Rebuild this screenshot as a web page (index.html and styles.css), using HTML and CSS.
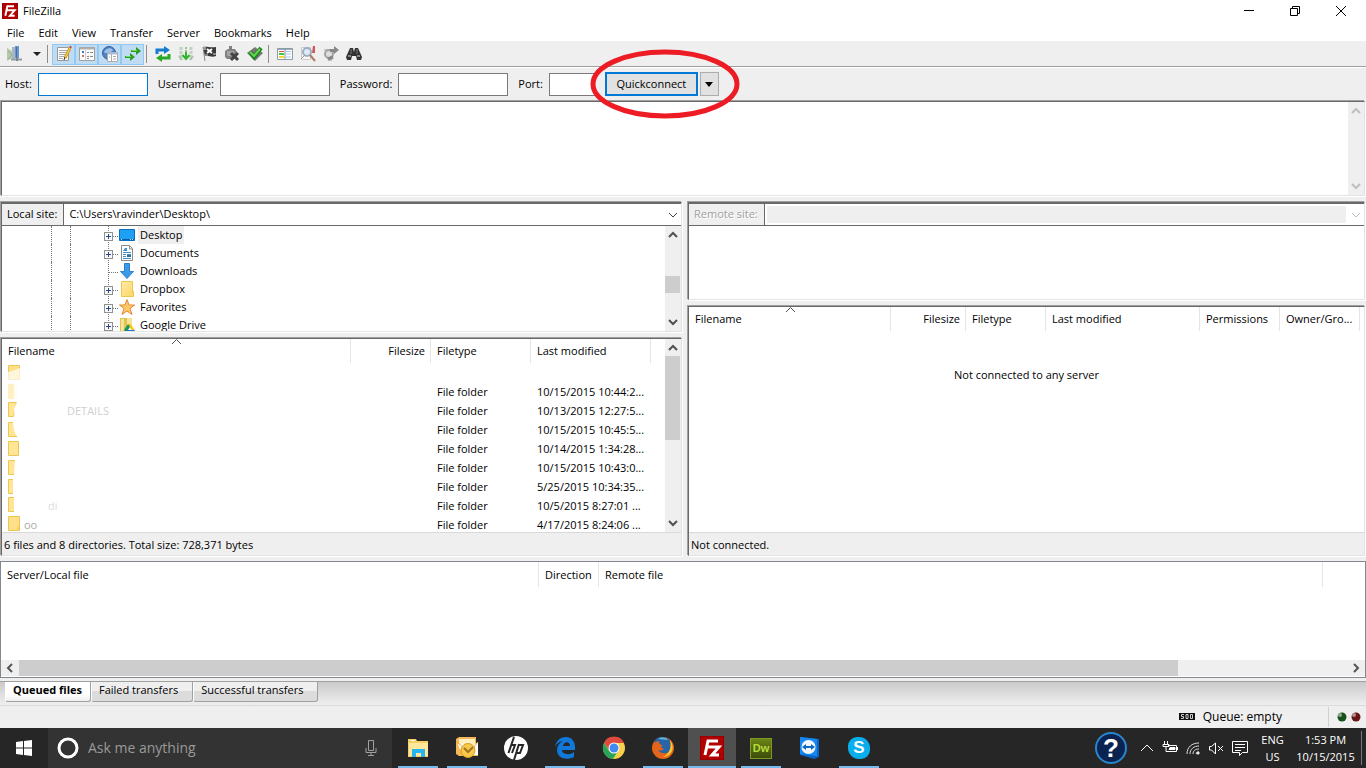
FILE: index.html
```
<!DOCTYPE html>
<html lang="en">
<head>
    <meta charset="utf-8">
    <meta name="viewport" content="width=device-width">
    <title>FileZilla</title>
    <link rel="stylesheet" href="styles.css">
</head>

<body>
    <!-- shared shapes -->
    <svg class="defs" width="0" height="0">
        <defs>
            <linearGradient id="folderFill" x1="0" y1="0" x2="1" y2="1">
                <stop offset="0" stop-color="#ffe9a6"/>
                <stop offset="1" stop-color="#fbd866"/>
            </linearGradient>
            <symbol id="fz" viewBox="0 0 24 24">
                <rect width="24" height="24" fill="#b30000"/>
                <rect x="0.5" y="0.5" width="23" height="23" fill="none" stroke="#7d0000" stroke-dasharray="1 1"/>
                <path d="M5 19L8 5h10M6.500 11h6M12 11h7l-7 8h7" fill="none" stroke="#fff" stroke-width="3"/>
            </symbol>
            <symbol id="up" viewBox="0 0 16 16">
                <path d="M4 10l4-4 4 4" fill="none" stroke="currentColor" stroke-width="2"/>
            </symbol>
            <symbol id="down" viewBox="0 0 16 16">
                <path d="M4 6l4 4 4-4" fill="none" stroke="currentColor" stroke-width="2"/>
            </symbol>
            <symbol id="thin-down" viewBox="0 0 16 16">
                <path d="M4 6l4 4 4-4" fill="none" stroke="currentColor" stroke-width="1"/>
            </symbol>
            <symbol id="expander" viewBox="0 0 15 18">
                <path d="M4.500 0v18" stroke="#777" stroke-dasharray="1 1"/>
                <path d="M9 10.500h6" stroke="#777" stroke-dasharray="1 1"/>
                <rect x="0.500" y="6.500" width="8" height="8" fill="#f8f8f8" stroke="#919191"/>
                <path d="M2 10.500h5M4.500 8v5" stroke="#2a4a9c"/>
            </symbol>
            <symbol id="branch" viewBox="0 0 15 18">
                <path d="M4.500 0v18M5 10.500h10" stroke="#777" stroke-dasharray="1 1"/>
            </symbol>
            <symbol id="folder" viewBox="0 0 16 16">
                <path d="M2.500.500h11v10h1v5h-12z" fill="url(#folderFill)" stroke="#ecc64f"/>
                <path d="M12.500 10.500h2v5" fill="none" stroke="#ecc64f"/>
            </symbol>
        </defs>
    </svg>

    <div class="window">
        <header class="titlebar">
            <svg class="titlebar__logo" width="16" height="16"><use href="#fz"/></svg>
            <span class="titlebar__text">FileZilla</span>
            <button class="titlebar__button" aria-label="Minimize"><svg width="12" height="12"><path d="M1 5.500h10" stroke="#000"/></svg></button>
            <button class="titlebar__button" aria-label="Restore"><svg width="12" height="12" fill="none" stroke="#000"><path d="M1.500 3.500h7v7h-7zM3.500 3V1.500h7v7H9"/></svg></button>
            <button class="titlebar__button" aria-label="Close"><svg width="12" height="12"><path d="M1 1l10 10M11 1L1 11" stroke="#000"/></svg></button>
        </header>

        <nav class="menu">
            <button class="menu__item">File</button>
            <button class="menu__item">Edit</button>
            <button class="menu__item">View</button>
            <button class="menu__item">Transfer</button>
            <button class="menu__item">Server</button>
            <button class="menu__item">Bookmarks</button>
            <button class="menu__item">Help</button>
        </nav>

        <div class="toolbar">
            <button class="tool" aria-label="Site Manager">
                <svg width="16" height="16">
                    <path d="M1 2l5 3v7l-5 3z" fill="#b5c9af"/><path d="M2 5l4 4-4 4" fill="none" stroke="#8eae87"/>
                    <path d="M6 1h3v12H6z" fill="#a9b6c4"/><path d="M9 0h4v12H9z" fill="#6b98cb"/><path d="M10 1h1v10h-1z" fill="#3e6fae"/>
                    <path d="M5 13.500h11" stroke="#969ca3" stroke-width="2"/><path d="M11 11v4" stroke="#7b8490" stroke-width="2"/>
                </svg>
            </button>
            <button class="tool tool--caret" aria-label="Site list"><svg width="8" height="4"><path d="M0 0h8L4 4z" fill="#222"/></svg></button>
            <span class="toolbar__line"></span>
            <button class="tool tool--on" aria-label="Toggle message log">
                <svg width="16" height="16">
                    <path d="M1.500 1.500h11v13h-11z" fill="#fafafa" stroke="#999"/><path d="M3 4.500h8M3 6.500h8M3 8.500h6M3 10.500h5M3 12.500h4" stroke="#aaa"/>
                    <path d="M14 2L9 12" stroke="#d29b1d" stroke-width="3"/><path d="M14 2L9 12" stroke="#ffd95b"/><path d="M14 0l1 2" stroke="#c8463e" stroke-width="2"/><path d="M9 11l-1 3" stroke="#333"/>
                </svg>
            </button>
            <button class="tool tool--on" aria-label="Toggle local tree">
                <svg width="16" height="16">
                    <path d="M.500 1.500h15v13H.500z" fill="#fdfdfd" stroke="#a0a0a0"/><path d="M1 2.500h14" stroke="#b0b0b0" stroke-width="2"/>
                    <path d="M6.500 4v10" stroke="#ccc"/><path d="M3 5h2v2H3z" fill="#3375c7"/><path d="M3 9h2v2H3z" fill="#d36f6f"/>
                    <path d="M8 6.500h2M11 6.500h3M8 10.500h2M11 10.500h3M8 12.500h2" stroke="#888"/>
                </svg>
            </button>
            <button class="tool tool--on" aria-label="Toggle remote tree">
                <svg width="16" height="16">
                    <circle cx="7" cy="7" r="6.500" fill="#4f83c9" stroke="#315f9f"/><path d="M2 6c2-4 7-5 9-2l-3 3H3" fill="#9fc0e7"/>
                    <path d="M5.500 6.500h10v9h-10z" fill="#fff" stroke="#aaa"/><path d="M6 7.500h9" stroke="#aac0dc" stroke-width="2"/><path d="M9.500 8v7M11 10.500h3M11 13h3M7 11h1" stroke="#aaa"/>
                </svg>
            </button>
            <button class="tool tool--on" aria-label="Toggle queue">
                <svg width="16" height="16" fill="#2a9d22">
                    <path d="M6 4h5V1l5 4-5 4V6H6zM0 10h5V7l5 4-5 4v-3H0z"/><path d="M7 4.500h5M1 10.500h5" stroke="#6fdc5f"/>
                </svg>
            </button>
            <span class="toolbar__line"></span>
            <div class="toolbar__group">
                <button class="tool" aria-label="Refresh">
                    <svg width="16" height="16">
                        <path d="M2 8V4h8" fill="none" stroke="#157bd0" stroke-width="3"/><path d="M9 0l6 4-6 4z" fill="#157bd0"/>
                        <path d="M14 8v4H6" fill="none" stroke="#2aa927" stroke-width="3"/><path d="M7 8l-6 4 6 4z" fill="#2aa927"/>
                    </svg>
                </button>
                <button class="tool" aria-label="Process queue">
                    <svg width="16" height="16">
                        <path d="M3 1v13M13 1v13" stroke="#c3d0c1" stroke-width="3" stroke-dasharray="3 1"/>
                        <path d="M8 1v6" stroke="#8fc987" stroke-width="2" stroke-dasharray="2 1"/><path d="M8 6v6M4.500 9L8 13l3.500-4" fill="none" stroke="#33b42c" stroke-width="2"/><path d="M1 10l3 4M15 10l-3 4" stroke="#a3c79e" stroke-width="2"/>
                    </svg>
                </button>
                <button class="tool" aria-label="Cancel">
                    <svg width="16" height="16">
                        <path d="M2 1l2 14" stroke="#888"/><path d="M2 1c4-1 7 1 13 0v9c-5 2-7-1-11 0z" fill="#3a3a3a"/>
                        <path d="M2 1h3v3H2z" fill="#999"/><path d="M6 3l5 4M11 3L6 7" stroke="#fff" stroke-width="2"/><path d="M4 8h3v2H4zM12 7h3v2h-3z" fill="#888"/>
                    </svg>
                </button>
                <button class="tool" aria-label="Disconnect">
                    <svg width="16" height="16">
                        <path d="M5 0h3v4H5zM1 5l3-2h7l2 3v7H3l-2-2z" fill="#818181"/><path d="M3 5h7v5H3z" fill="#a5a5a5"/><path d="M7 7l7 7M14 7l-7 7" stroke="#444" stroke-width="3"/>
                    </svg>
                </button>
                <button class="tool" aria-label="Reconnect">
                    <svg width="16" height="16">
                        <path d="M8 1l8 6-8 8-8-8z" fill="#777"/><path d="M3 6l4 5 7-9" fill="none" stroke="#128715" stroke-width="4"/><path d="M3 6l4 4 6-7" fill="none" stroke="#68d557" stroke-width="2"/>
                    </svg>
                </button>
            </div>
            <span class="toolbar__line"></span>
            <div class="toolbar__group">
                <button class="tool" aria-label="Directory listing filters">
                    <svg width="16" height="16">
                        <path d="M.500 2.500h15v11H.500z" fill="#fff" stroke="#8a9aa8"/><path d="M1 3.500h14" stroke="#9badbd"/>
                        <path d="M2 5.500h5" stroke="#e25555"/><path d="M2 8h5" stroke="#44c638" stroke-width="2"/><path d="M2 11h5" stroke="#f2d438" stroke-width="2"/>
                        <path d="M9 5.500h5M9 8h5M9 11h5" stroke="#a9c3e5"/><path d="M8 3v10" stroke="#7698ae"/>
                    </svg>
                </button>
                <button class="tool" aria-label="Compare directories">
                    <svg width="16" height="16">
                        <path d="M1.500 1.500h9v12h-9z" fill="#f8f8f8" stroke="#ccc"/><path d="M13 0h2v7h-3z" fill="#cf5555"/>
                        <circle cx="7" cy="6" r="4" fill="#dcebfa" stroke="#9fb0c2" stroke-width="2"/><path d="M10 9l5 6" stroke="#b07a66" stroke-width="2"/><path d="M1 13l4-4" stroke="#999"/>
                    </svg>
                </button>
                <button class="tool" aria-label="Synchronized browsing">
                    <svg width="16" height="16">
                        <path d="M1 3h8l2 3-2 9H5z" fill="#c4c4c4"/><circle cx="6" cy="8" r="4" fill="#ddd" stroke="#a2a2a2" stroke-width="2"/>
                        <path d="M7 3h4V0l5 4-5 4V6H7z" fill="#888"/><path d="M5 13l5-2" stroke="#888" stroke-width="3"/>
                    </svg>
                </button>
                <button class="tool" aria-label="Search remote files">
                    <svg width="16" height="16">
                        <path d="M4 2h3l1 4 1-4h3l4 9-1 3h-4l-1-4H6l-1 4H1l-1-3z" fill="#333"/><path d="M2 10h3M11 10h3" stroke="#888" stroke-width="2"/><path d="M5 3v5M11 3v5" stroke="#777"/>
                    </svg>
                </button>
            </div>
        </div>

        <form class="login">
            <label class="login__label" for="host">Host:</label>
            <input class="login__input login__input--focus" id="host" type="text">
            <label class="login__label" for="user">Username:</label>
            <input class="login__input" id="user" type="text">
            <label class="login__label" for="pass">Password:</label>
            <input class="login__input" id="pass" type="password">
            <label class="login__label" for="port">Port:</label>
            <input class="login__input login__input--port" id="port" type="text">
            <div class="login__connect">
                <button class="connect" type="button">Quickconnect</button>
                <button class="connect-menu" type="button" aria-label="Recent servers"><svg width="8" height="5"><path d="M0 0h8L4 5z"/></svg></button>
                <svg class="login__ring" width="152" height="72"><ellipse cx="76" cy="36" rx="72" ry="32" fill="none" stroke="#ed1c24" stroke-width="5"/></svg>
            </div>
        </form>

        <section class="pane log">
            <div class="scroll scroll--off">
                <svg width="16" height="16"><use href="#up"/></svg>
                <svg class="scroll__end" width="16" height="16"><use href="#down"/></svg>
            </div>
        </section>

        <main class="sites">
            <section class="side">
                <div class="pane tree-pane">
                    <div class="path">
                        <label class="path__label" for="local">Local site:</label>
                        <div class="path__box">
                            <select class="path__select" id="local"><option>C:\Users\ravinder\Desktop\</option></select>
                            <svg class="path__arrow" width="16" height="16"><use href="#thin-down"/></svg>
                        </div>
                    </div>
                    <div class="pane__body">
                        <ul class="tree">
                            <li class="tree__row">
                                <span class="tree__guide"></span><span class="tree__guide tree__guide--wide"></span>
                                <svg width="15" height="18"><use href="#expander"/></svg>
                                <svg width="16" height="16"><path d="M.500 2.500h15v11H.500z" fill="#1ea0f5" stroke="#0b6fc0"/><path d="M1 12.500h14" stroke="#0a5da8"/><path d="M2 12.500h1M11 12.500h1M13 12.500h1" stroke="#bfe3ff"/></svg>
                                <span class="tree__name tree__name--current">Desktop</span>
                            </li>
                            <li class="tree__row">
                                <span class="tree__guide"></span><span class="tree__guide tree__guide--wide"></span>
                                <svg width="15" height="18"><use href="#expander"/></svg>
                                <svg width="16" height="16"><path d="M2.500.500h8l3 3v12h-11z" fill="#fff" stroke="#8b8b8b"/><path d="M10.500 1v3h3" fill="none" stroke="#8b8b8b"/><path d="M4 6l2-3h2v3z" fill="#3d95d5"/><path d="M4 7.500h8M4 9.500h3M8 9.500h4M4 11.500h3M4 13.500h8" stroke="#4290c5"/><path d="M8 10h4v2H8z" fill="#2d6f90"/></svg>
                                <span class="tree__name">Documents</span>
                            </li>
                            <li class="tree__row">
                                <span class="tree__guide"></span><span class="tree__guide tree__guide--wide"></span>
                                <svg width="15" height="18"><use href="#branch"/></svg>
                                <svg width="16" height="16"><path d="M5.500.500h5v8h4l-6.500 7-6.500-7h4z" fill="#3b9be9" stroke="#2c80ca"/></svg>
                                <span class="tree__name">Downloads</span>
                            </li>
                            <li class="tree__row">
                                <span class="tree__guide"></span><span class="tree__guide tree__guide--wide"></span>
                                <svg width="15" height="18"><use href="#expander"/></svg>
                                <svg width="16" height="16"><use href="#folder"/></svg>
                                <span class="tree__name">Dropbox</span>
                            </li>
                            <li class="tree__row">
                                <span class="tree__guide"></span><span class="tree__guide tree__guide--wide"></span>
                                <svg width="15" height="18"><use href="#expander"/></svg>
                                <svg width="16" height="16"><path d="M8 .500l2 5.500h5.500L11 9.500l2 6L8 12l-5 3.500 2-6L.500 6H6z" fill="#ffc864" stroke="#e08a35"/></svg>
                                <span class="tree__name">Favorites</span>
                            </li>
                            <li class="tree__row">
                                <span class="tree__guide"></span><span class="tree__guide tree__guide--wide"></span>
                                <svg width="15" height="18"><use href="#expander"/></svg>
                                <svg width="16" height="16"><path d="M1 1h7v14H1z" fill="#e3c34f"/><path d="M2 2h3v12H2zM8 1h5v9H8z" fill="#f7e397"/><path d="M9 7h3l4 7h-3z" fill="#f8c51c"/><path d="M9 7l2 3-4 6-2-3z" fill="#159957"/><path d="M8 13h8l-2 3H6z" fill="#2f6fdb"/></svg>
                                <span class="tree__name">Google Drive</span>
                            </li>
                        </ul>
                        <div class="scroll">
                            <svg width="16" height="16"><use href="#up"/></svg>
                            <span class="scroll__thumb scroll__thumb--tree"></span>
                            <svg class="scroll__end" width="16" height="16"><use href="#down"/></svg>
                        </div>
                    </div>
                </div>

                <div class="pane list-pane">
                    <div class="pane__body">
                        <div class="list">
                            <table class="files">
                                <colgroup><col><col class="w80"><col class="w100"><col class="w120"><col class="w14"></colgroup>
                                <thead>
                                    <tr>
                                        <th class="sorted">Filename<svg class="sort" width="9" height="5"><path d="M0 5l4.500-4.500L9 5" fill="none" stroke="#555"/></svg></th>
                                        <th class="num">Filesize</th><th>Filetype</th><th>Last modified</th><th class="rest"></th>
                                    </tr>
                                </thead>
                                <tbody>
                                    <tr><td><svg class="smudge" width="14" height="16"><path d="M.500.500h11v14H.500z" fill="#ffe08a" stroke="#ecc64f"/><path d="M0 7q6-1 14-5v14H0z" fill="#fff" opacity=".7"/></svg></td><td></td><td></td><td></td><td></td></tr>
                                    <tr><td><svg class="smudge" width="14" height="16"><path d="M.500.500h8v14h-8z" fill="#fff0c4" stroke="#fff0c4"/><path d="M6 0h8v16H6z" fill="#fff" opacity=".8"/></svg></td><td></td><td>File folder</td><td>10/15/2015 10:44:2...</td><td></td></tr>
                                    <tr><td><svg class="smudge" width="14" height="16"><path d="M.500.500h8l-3 14h-5z" fill="#ffe596" stroke="#ecc64f"/><path d="M9 0L6 7l1 9h7V0z" fill="#fff"/></svg><span class="ghost ghost--far">DETAILS</span></td><td></td><td>File folder</td><td>10/13/2015 12:27:5...</td><td></td></tr>
                                    <tr><td><svg class="smudge" width="14" height="16"><path d="M.500.500h10v14H.500z" fill="#ffe596" stroke="#ecc64f"/><path d="M5 0q0 9 5 16h4V0z" fill="#fff"/></svg></td><td></td><td>File folder</td><td>10/15/2015 10:45:5...</td><td></td></tr>
                                    <tr><td><svg class="smudge" width="14" height="16"><path d="M.500.500h10v14H.500z" fill="#ffe596" stroke="#ecc64f"/></svg></td><td></td><td>File folder</td><td>10/14/2015 1:34:28...</td><td></td></tr>
                                    <tr><td><svg class="smudge" width="14" height="16"><path d="M.500.500h8v14h-8z" fill="#ffe596" stroke="#ecc64f"/><path d="M7 0h7v16H6z" fill="#fff"/></svg></td><td></td><td>File folder</td><td>10/15/2015 10:43:0...</td><td></td></tr>
                                    <tr><td><svg class="smudge" width="14" height="16"><path d="M.500.500h6v14h-6z" fill="#ffe596" stroke="#ecc64f"/><path d="M5 0h9v16H5z" fill="#fff"/></svg></td><td></td><td>File folder</td><td>5/25/2015 10:34:35...</td><td></td></tr>
                                    <tr><td><svg class="smudge" width="14" height="16"><path d="M.500.500h6v14h-6z" fill="#ffe596" stroke="#ecc64f"/><path d="M6 0h8v16H6z" fill="#fff"/></svg><span class="ghost ghost--mid">di</span></td><td></td><td>File folder</td><td>10/5/2015 8:27:01 ...</td><td></td></tr>
                                    <tr><td><svg class="smudge" width="14" height="16"><path d="M.500.500h11v14H.500z" fill="#ffe08a" stroke="#ecc64f"/><path d="M10 10v5" stroke="#ecc64f"/></svg><span class="ghost">oo</span></td><td></td><td>File folder</td><td>4/17/2015 8:24:06 ...</td><td></td></tr>
                                </tbody>
                            </table>
                        </div>
                        <div class="scroll">
                            <svg width="16" height="16"><use href="#up"/></svg>
                            <span class="scroll__thumb scroll__thumb--list"></span>
                            <svg class="scroll__end" width="16" height="16"><use href="#down"/></svg>
                        </div>
                    </div>
                    <div class="pane__status">6 files and 8 directories. Total size: 728,371 bytes</div>
                </div>
            </section>

            <section class="side">
                <div class="pane remote-tree">
                    <div class="path">
                        <label class="path__label path__label--off" for="remote">Remote site:</label>
                        <div class="path__box">
                            <select class="path__select path__select--off" id="remote" disabled><option></option></select>
                            <svg class="path__arrow path__arrow--off" width="16" height="16"><use href="#thin-down"/></svg>
                        </div>
                    </div>
                </div>
                <div class="pane list-pane">
                    <div class="pane__body">
                        <div class="list">
                            <table class="files">
                                <colgroup><col><col class="w75"><col class="w80"><col class="w154"><col class="w80"><col class="w80"><col class="w4"></colgroup>
                                <thead>
                                    <tr>
                                        <th class="sorted">Filename<svg class="sort" width="9" height="5"><path d="M0 5l4.500-4.500L9 5" fill="none" stroke="#555"/></svg></th>
                                        <th class="num">Filesize</th><th>Filetype</th><th>Last modified</th><th>Permissions</th><th>Owner/Gro...</th><th class="rest"></th>
                                    </tr>
                                </thead>
                            </table>
                            <p class="list__empty">Not connected to any server</p>
                        </div>
                    </div>
                    <div class="pane__status">Not connected.</div>
                </div>
            </section>
        </main>

        <section class="queue">
            <table class="files files--queue">
                <colgroup><col class="w538"><col class="w60"><col><col class="w42"></colgroup>
                <thead>
                    <tr><th>Server/Local file</th><th>Direction</th><th>Remote file</th><th class="rest"></th></tr>
                </thead>
            </table>
            <div class="hscroll">
                <svg width="18" height="16"><path d="M11 4L7 8l4 4" fill="none" stroke="#555" stroke-width="2"/></svg>
                <span class="hscroll__track"><span class="hscroll__thumb"></span></span>
                <svg width="18" height="16"><path d="M7 4l4 4-4 4" fill="none" stroke="#555" stroke-width="2"/></svg>
            </div>
        </section>

        <div class="tabs">
            <button class="tab tab--active">Queued files</button>
            <button class="tab">Failed transfers</button>
            <button class="tab">Successful transfers</button>
        </div>

        <footer class="statusbar">
            <svg width="16" height="8"><path d="M0 0h16v7H0z" fill="#111"/><path d="M5 1.500H2.500V3.500h2v2H2M7 1.500h2v4H7zM11.500 1.500h2v4h-2z" fill="none" stroke="#ccc"/></svg>
            <span class="statusbar__text">Queue: empty</span>
            <span class="statusbar__leds">
                <svg width="10" height="10"><circle cx="5" cy="5" r="4.500" fill="#16501a"/><circle cx="3" cy="3" r="2" fill="#8fa88f"/></svg>
                <svg width="10" height="10"><circle cx="5" cy="5" r="4.500" fill="#6a1515"/><circle cx="3" cy="3" r="2" fill="#b58f8f"/></svg>
            </span>
        </footer>
    </div>

    <div class="taskbar">
        <button class="start" aria-label="Start"><svg width="16" height="16" fill="#fff"><path d="M0 2l7-1v6.500H0zM8 1l8-1v7.500H8zM0 8.500h7V15l-7-1zM8 8.500h8V16l-8-1z"/></svg></button>
        <div class="search">
            <svg width="22" height="22"><circle cx="11" cy="11" r="9" fill="none" stroke="#fff" stroke-width="3"/></svg>
            <input class="search__input" type="text" placeholder="Ask me anything" aria-label="Ask me anything">
            <svg width="12" height="18" fill="none" stroke="#a0a0a0"><path d="M3.500 1.500h5v10h-5zM1 9v4.500h10V9M6 14v3M3 16.500h6"/></svg>
        </div>
        <div class="apps">
            <button class="app app--open" aria-label="File Explorer">
                <svg width="24" height="24"><path d="M2 4V3h8l1 2h11v16H2z" fill="#f5cf63"/><path d="M3 7h19v13H3z" fill="#ffe79c"/><path d="M6 21v-8h13v8h-4v-4h-5v4z" fill="#27b5ef"/><path d="M5 4.500h4" stroke="#fff"/></svg>
            </button>
            <button class="app app--open" aria-label="Outlook">
                <svg width="24" height="24"><path d="M1 3l3-2h17v6h2v13H4l-3-2z" fill="#f6b756"/><path d="M4 3h16v8H4z" fill="#fff0bf"/><path d="M3 8h8l-6 6zM23 6v13h-6l-1-8z" fill="#fff"/><path d="M1 5l8 7M23 6l-5 6" fill="none" stroke="#e9a63b"/><circle cx="13" cy="14.500" r="7" fill="#f7c747" stroke="#d99b24"/><path d="M9 12l4 4 5-5" fill="none" stroke="#a07421" stroke-width="2"/></svg>
            </button>
            <button class="app" aria-label="HP">
                <svg width="24" height="24"><circle cx="12" cy="12" r="12" fill="#fff"/><path d="M10 1L4.500 17M7 9h4l-3 8M15 8l-5 16M14 9h5l-3 8h-4" fill="none" stroke="#262626" stroke-width="2"/></svg>
            </button>
            <button class="app app--open" aria-label="Edge">
                <svg width="24" height="24"><path d="M2 11C3 5 7 1 13 1c6 0 9 5 9 10v3H9c0 4 7 6 12 2v5c-8 4-17 1-17-7 0-4 2-7 6-9-5 1-7 4-8 6zm8-1h7c0-5-6-5-7 0z" fill="#0f78d8"/></svg>
            </button>
            <button class="app" aria-label="Chrome">
                <svg width="24" height="24"><circle cx="12" cy="12" r="11" fill="#f8d04a"/><path d="M2 7a11 11 0 0 1 20 0H12l-4 8z" fill="#df4b3e"/><path d="M2 7a11 11 0 0 0 9 16l5-8-8 1z" fill="#29a55a"/><circle cx="12" cy="12" r="5.500" fill="#fff"/><circle cx="12" cy="12" r="4.500" fill="#438bf2"/></svg>
            </button>
            <button class="app app--open" aria-label="Firefox">
                <svg width="24" height="24"><circle cx="12" cy="12" r="11" fill="#e5641b"/><path d="M4 4c5-5 13-3 15 1l1 7c-1 4-4 6-8 5-3 0-5-2-4-3 2 1 4 0 5-1-4-1-3-3-1-4-4 0-4-2-4-4-2 0-3 1-4 2z" fill="#2765a8"/><path d="M7 3c3-2 8-2 10 1z" fill="#5fb7df"/><path d="M19 4c6 8 1 17-7 17 6-3 9-9 7-17z" fill="#ffc82e"/></svg>
            </button>
            <button class="app app--open app--active" aria-label="FileZilla"><svg width="24" height="24"><use href="#fz"/></svg></button>
            <button class="app app--open" aria-label="Dreamweaver"><span class="dw">Dw</span></button>
            <button class="app" aria-label="TeamViewer">
                <svg width="24" height="24"><path d="M2 1l19 2v18l-5 2L2 19z" fill="#0864c8"/><path d="M2 1l17 2v17L2 18z" fill="#1688ef"/><circle cx="10.500" cy="11" r="7" fill="#f5f8fb"/><path d="M4 11l4-3v2h5V8l4 3-4 3v-2H8v2z" fill="#0c69c8"/></svg>
            </button>
            <button class="app app--open" aria-label="Skype"><span class="skype">S</span></button>
        </div>

        <div class="tray">
            <button class="tray__help" aria-label="Help">?</button>
            <svg width="16" height="16"><path d="M2 11l6-6 6 6" fill="none" stroke="#fff"/></svg>
            <svg width="16" height="16" fill="none" stroke="#fff"><path d="M2.500 1v3M5.500 1v3M1 4.500h6v2H1zM4 7v4.500h1M6 5.500h8.500v6H5M15.500 7v3"/><path d="M8 7.500h5v2H7z" fill="#fff"/></svg>
            <svg width="16" height="16" fill="none" stroke="#ddd"><path d="M2 14C2 7 7 3 14 3M5 14c0-5 4-8 9-8M8 14c0-3 2-5 6-5M11 14q0-2 3-2"/><path d="M12 12h2v2h-2z" fill="#fff"/></svg>
            <svg width="16" height="16" fill="none" stroke="#fff"><path d="M1.500 6.500h2L7.500 3v11l-4-4h-2zM10 6l5 5M15 6l-5 5"/></svg>
            <svg width="18" height="18" fill="none" stroke="#fff"><path d="M1.500 2.500h15v11h-5l-3 3v-3h-7zM4 5.500h10M4 8.500h10M4 11.500h6"/></svg>
            <div class="tray__lang">ENG<br>US</div>
            <div class="tray__clock">1:53 PM<br>10/15/2015</div>
        </div>
    </div>
</body>
</html>
```
FILE: styles.css
```
* {
    box-sizing: border-box;
}

html, body {
    margin: 0;
    padding: 0;
}

body {
    display: flex;
    flex-direction: column;
    height: 100vh;
    min-width: 1200px;
    overflow: hidden;
    font: 11px/18px "Open Sans", "Noto Sans", sans-serif;
    color: #000;
    background: #efefef;
}

button, input, select {
    font: inherit;
    color: inherit;
    border-radius: 0;
}

button {
    padding: 0;
    border: 0;
    background: none;
}

svg {
    display: block;
    flex: none;
}

.defs {
    position: absolute;
}

.window {
    display: flex;
    flex: 1;
    flex-direction: column;
    min-height: 0;
}

/* title and menu */
.titlebar {
    display: flex;
    align-items: center;
    height: 22px;
    padding-left: 2px;
    background: #fff;
}

.titlebar__text {
    flex: 1;
    padding-left: 5px;
}

.titlebar__button {
    display: flex;
    align-items: center;
    justify-content: center;
    width: 46px;
    height: 22px;
}

.titlebar__button:last-child {
    margin-right: 2px;
}

.menu {
    display: flex;
    gap: 14px;
    height: 19px;
    padding: 0 7px;
    background: #fff;
}

.menu__item {
    line-height: 21px;
}

/* toolbar */
.toolbar {
    display: flex;
    align-items: center;
    height: 27px;
    padding: 0 6px;
    border-bottom: 1px solid #fff;
    box-shadow: inset 0 -1px #a0a0a0;
}

.tool {
    display: flex;
    align-items: center;
    justify-content: center;
    width: 23px;
    height: 21px;
}

.toolbar > .tool:first-child {
    width: 16px;
}

.tool--on {
    border: 1px solid #90c8f6;
    background: #c0dcf3;
}

.tool--caret {
    width: 23px;
    padding-left: 6px;
}

.toolbar__line {
    width: 1px;
    height: 18px;
    margin: 0 4px 0 2px;
    background: #8d8d8d;
}

.toolbar__group {
    display: flex;
}

/* quickconnect bar */
.login {
    display: flex;
    align-items: center;
    height: 32px;
    padding-left: 5px;
}

.login__label {
    margin-right: 6px;
}

.login__input {
    width: 110px;
    height: 23px;
    margin-right: 10px;
    padding: 0 3px;
    border: 1px solid #7a7a7a;
    outline: 0;
    background: #fff;
}

.login__input--focus {
    border-color: #0078d7;
}

.login__input--port {
    width: 46px;
}

.login__connect {
    position: relative;
    display: flex;
    gap: 2px;
}

.connect {
    width: 93px;
    height: 24px;
    border: 2px solid #0078d7;
    background: #e1e1e1;
}

.connect-menu {
    display: flex;
    align-items: center;
    justify-content: center;
    width: 19px;
    height: 24px;
    border: 1px solid #adadad;
    background: #e1e1e1;
}

.login__ring {
    position: absolute;
    top: -24px;
    left: -16px;
    z-index: 2;
    pointer-events: none;
}

/* sunken panes */
.pane {
    display: flex;
    flex-direction: column;
    border: 1px solid;
    border-color: #696969 #e3e3e3 #e3e3e3 #696969;
    background: #fff;
    box-shadow: -1px -1px #a0a0a0, 1px 1px #fff;
    overflow: hidden;
}

.pane__body {
    display: flex;
    flex: 1;
    min-height: 0;
}

.pane__status {
    height: 23px;
    padding-left: 2px;
    border-top: 1px solid #d9d9d9;
    background: #efefef;
    line-height: 23px;
}

.log {
    flex-direction: row;
    justify-content: flex-end;
    height: 95px;
    margin: 1px 1px 6px;
}

.sites {
    display: grid;
    grid-template-columns: 681fr 677fr;
    gap: 6px;
    flex: 1;
    min-height: 0;
    padding: 0 1px;
}

.side {
    display: flex;
    flex-direction: column;
    gap: 6px;
    min-width: 0;
    min-height: 0;
}

.tree-pane {
    height: 130px;
}

.remote-tree {
    height: 98px;
}

.list-pane {
    flex: 1;
    min-height: 0;
}

.path {
    display: flex;
    height: 23px;
    border-top: 1px solid #696969;
    border-bottom: 1px solid #696969;
}

.path__label {
    padding: 0 6px 0 5px;
    border-right: 1px solid #696969;
    background: #efefef;
    line-height: 20px;
}

.path__label--off {
    color: #a0a0a0;
    text-shadow: 1px 1px #fff;
}

.path__box {
    display: grid;
    flex: 1;
    grid-template-rows: 21px;
}

.path__select {
    grid-area: 1 / 1;
    padding: 0 5px 2px;
    border: 0;
    outline: 0;
    background: #fff;
    appearance: none;
}

.path__select--off {
    margin: 2px 18px 2px 2px;
    padding: 0;
    background: #efefef;
    opacity: 1;
}

.path__arrow {
    grid-area: 1 / 1;
    align-self: center;
    justify-self: end;
    color: #444;
    pointer-events: none;
}

.path__arrow--off {
    color: #bbb;
}

/* directory tree */
.tree {
    flex: 1;
    margin: 0;
    padding: 0 0 0 49px;
    list-style: none;
    overflow: hidden;
}

.tree__row {
    display: flex;
    align-items: center;
    height: 18px;
}

.tree__guide {
    width: 19px;
    height: 18px;
    border-left: 1px dotted #777;
}

.tree__guide--wide {
    width: 34px;
}

.tree__name {
    margin-left: 3px;
    padding: 0 2px;
}

.tree__name--current {
    background: #efefef;
}

/* scrollbars */
.scroll {
    display: flex;
    flex: none;
    flex-direction: column;
    width: 16px;
    padding: 1px 0;
    background: #efefef;
    color: #505050;
}

.scroll--off {
    color: #bfbfbf;
}

.scroll__end {
    margin-top: auto;
}

.scroll__thumb {
    width: 15px;
    background: #cdcdcd;
}

.scroll__thumb--tree {
    height: 17px;
    margin-top: 33px;
}

.scroll__thumb--list {
    height: 84px;
}

.hscroll {
    display: flex;
    height: 16px;
    margin-bottom: 1px;
    background: #efefef;
}

.hscroll__track {
    display: flex;
    flex: 1;
}

.hscroll__thumb {
    width: 87.3%;
    background: #cdcdcd;
}

/* file lists */
.list {
    flex: 1;
    min-width: 0;
    overflow: hidden;
}

.list__empty {
    margin: 35px 0 0;
    text-align: center;
}

.files {
    width: 100%;
    border-collapse: separate;
    border-spacing: 0;
    table-layout: fixed;
}

.files th {
    position: relative;
    height: 24px;
    padding: 0 5px 0 6px;
    border-right: 1px solid #e5e5e5;
    font-weight: normal;
    text-align: left;
    white-space: nowrap;
}

.files--queue th {
    height: 25px;
}

.files td {
    height: 19px;
    padding: 0 0 0 6px;
    line-height: 18px;
    white-space: nowrap;
}

.files .num {
    text-align: right;
}

.files .rest {
    padding: 0;
    border: 0;
}

.sort {
    position: absolute;
    top: 0;
    left: calc(50% - 4px);
}

.smudge {
    float: left;
}

.ghost {
    padding-left: 2px;
    color: #aaa;
}

.ghost--mid {
    padding-left: 26px;
    color: #ddd;
}

.ghost--far {
    padding-left: 45px;
    color: #d0d0d0;
}

.w4 { width: 4px; }
.w14 { width: 14px; }
.w42 { width: 42px; }
.w60 { width: 60px; }
.w75 { width: 75px; }
.w80 { width: 80px; }
.w100 { width: 100px; }
.w120 { width: 120px; }
.w154 { width: 154px; }
.w538 { width: 538px; }

/* transfer queue */
.queue {
    display: flex;
    flex-direction: column;
    justify-content: space-between;
    height: 117px;
    margin-top: 5px;
    border: 1px solid #828790;
    background: #fff;
}

.tabs {
    display: flex;
    align-items: flex-start;
    height: 25px;
    margin-top: 3px;
    padding-left: 5px;
    border-top: 1px solid #a0a0a0;
    border-bottom: 1px solid #d9d9d9;
    background: linear-gradient(#cacaca, #efefef);
}

.tab {
    height: 20px;
    padding: 0 14px 3px 7px;
    border: 1px solid #a0a0a0;
    border-top: 0;
    border-left-color: #fff;
    border-radius: 0 0 3px 3px;
    background: linear-gradient(#efefef 50%, #dcdcdc 50%);
    line-height: 16px;
}

.tab--active {
    padding-right: 8px;
    background: linear-gradient(#fff 60%, #efefef);
    font-weight: bold;
}

.statusbar {
    display: flex;
    align-items: center;
    justify-content: flex-end;
    height: 22px;
}

.statusbar__text {
    margin: 0 46px 0 8px;
    font-size: 12px;
}

.statusbar__leds {
    display: flex;
    align-items: center;
    gap: 4px;
    height: 20px;
    padding: 0 5px 0 8px;
    border-left: 1px solid #d0d0d0;
}

/* taskbar */
.taskbar {
    display: flex;
    height: 40px;
    background: #262626;
    color: #fff;
}

.start {
    display: flex;
    align-items: center;
    justify-content: center;
    width: 48px;
}

.search {
    display: flex;
    align-items: center;
    width: 344px;
    padding: 0 15px 0 9px;
    background: #333;
}

.search__input {
    flex: 1;
    min-width: 0;
    padding: 0 9px;
    border: 0;
    outline: 0;
    background: none;
    font-size: 14px;
}

.search__input::placeholder {
    color: #9a9a9a;
}

.apps {
    display: flex;
    gap: 1px;
    padding-left: 2px;
}

.app {
    display: flex;
    align-items: center;
    justify-content: center;
    position: relative;
    width: 48px;
}

.app--active {
    background: #505050;
}

.app--open::after {
    content: "";
    position: absolute;
    right: 4px;
    bottom: 0;
    left: 4px;
    height: 2px;
    background: #76b9ed;
}

.app--active::after {
    right: 0;
    left: 0;
}

.dw {
    width: 22px;
    height: 21px;
    border: 1px solid #7f9a22;
    background: linear-gradient(#6b8416, #3c4d0c);
    color: #b6dc3a;
    font: bold 11px/19px "Liberation Sans", sans-serif;
}

.skype {
    width: 22px;
    height: 22px;
    border-radius: 9px 11px;
    background: #09aeea;
    font: bold 17px/22px "Liberation Sans", sans-serif;
}

.tray {
    display: flex;
    align-items: center;
    gap: 7px;
    margin-left: auto;
    padding-right: 4px;
}

.tray__help {
    width: 32px;
    height: 32px;
    margin-right: 5px;
    border: 2px solid #2a86cf;
    border-radius: 50%;
    background: #0b2350;
    font: bold 26px/28px "Liberation Sans", sans-serif;
}

.tray__lang, .tray__clock {
    font-size: 11px;
    line-height: 17px;
    text-align: center;
}

.tray__lang {
    width: 30px;
    padding-left: 3px;
}

.tray__clock {
    width: 69px;
    padding-right: 3px;
    border-right: 1px solid #777;
}
```
